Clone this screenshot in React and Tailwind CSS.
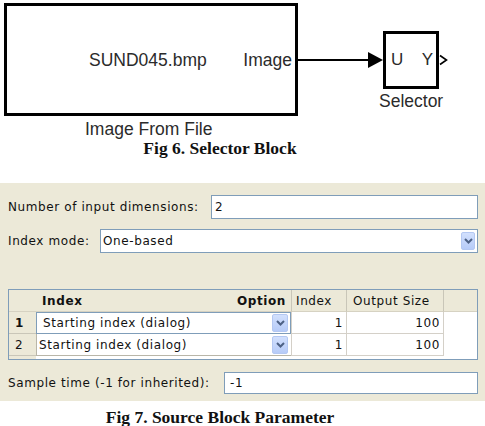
import React from 'react';

// small XP-style combo arrow button
function DropButton({ className }) {
  return (
    <span className={className}>
      <svg width="9" height="6" viewBox="0 0 9 6" fill="none">
        <path d="M1 1 L4.5 4.5 L8 1" stroke="#4D6185" strokeWidth="2" />
      </svg>
    </span>
  );
}

function ModelCanvas() {
  return (
    <div className="relative h-[138px] font-['Liberation_Sans',Arial,sans-serif] text-[17.5px] leading-[20px] text-[#2b2b2b]">
      {/* Image From File block */}
      <div className="absolute left-[4px] top-[3px] w-[294px] h-[113px] border-[3px] border-black flex items-center justify-between pl-[82px] pr-[3px]">
        <span>SUND045.bmp</span>
        <span>Image</span>
      </div>
      <div className="absolute left-[85px] top-[119px] whitespace-nowrap">Image From File</div>

      {/* signal line + input port */}
      <svg className="absolute left-[298px] top-[50px]" width="90" height="20" viewBox="0 0 90 20">
        <line x1="0" y1="10" x2="72" y2="10" stroke="#000" strokeWidth="2" />
        <path d="M70 2 L85 10 L70 18 Z" fill="#000" />
      </svg>

      {/* Selector block */}
      <div className="absolute left-[383px] top-[31px] w-[56px] h-[58px] border-[3px] border-black flex items-center justify-between pl-[5px] pr-[3px] text-[17px]">
        <span>U</span>
        <span>Y</span>
      </div>
      <svg className="absolute left-[439px] top-[54px]" width="10" height="12" viewBox="0 0 10 12">
        <path d="M1 1.5 L7.5 6 L1 10.5" stroke="#000" strokeWidth="1.6" fill="none" />
      </svg>
      <div className="absolute left-[379px] top-[91px] whitespace-nowrap">Selector</div>
    </div>
  );
}

function Caption({ children }) {
  return (
    <p className="pr-[45px] text-center font-['Liberation_Serif','Times_New_Roman',serif] font-bold text-[17.5px] leading-[20px] text-[#111]">
      {children}
    </p>
  );
}

function TableCell({ className, children }) {
  return <div className={className}>{children}</div>;
}

function ParameterDialog() {
  const head = 'bg-[#ECE9D8] flex items-center border-b border-[#D6D2C2]';
  const num = 'bg-[#ECE9D8] flex items-center pl-[6px] border-b border-[#C9C6B8]';
  const val = 'bg-white flex items-center justify-end pr-[3px] border-l border-b border-[#D4D0C8]';

  return (
    <div className="h-[218px] bg-[#ECE9D8] pl-2 pr-[7px] pt-3 font-['DejaVu_Sans',Verdana,sans-serif] text-[12px] tracking-[0.6px] text-[#111]">
      <div className="flex items-center">
        <span className="w-[203px] shrink-0">Number of input dimensions:</span>
        <div className="flex-1 h-[24px] bg-white border border-[#7F9DB9] flex items-center pl-[3px]">2</div>
      </div>

      <div className="flex items-center mt-[10px]">
        <span className="w-[92px] shrink-0">Index mode:</span>
        <div className="flex-1 h-[24px] bg-white border border-[#7F9DB9] flex items-center justify-between pl-[2px] pr-[2px]">
          <span>One-based</span>
          <DropButton className="w-[14px] h-[18px] flex items-center justify-center rounded-[2px] border border-[#B4C8F2] bg-[linear-gradient(#D2E0FD,#B6CBF8)]" />
        </div>
      </div>

      {/* index table */}
      <div className="mt-9 h-[71px] border border-[#7F9DB9] bg-white grid grid-cols-[27px_255px_55px_97px_1fr] grid-rows-[22px_22px_22px_1fr]">
        <TableCell className={head} />
        <TableCell className={`${head} justify-between pl-[6px] pr-[5px] font-bold`}>
          <span>Index</span>
          <span>Option</span>
        </TableCell>
        <TableCell className={`${head} border-l border-l-[#C9C6B8] pl-[4px]`}>Index</TableCell>
        <TableCell className={`${head} border-l border-l-[#C9C6B8] pl-[6px]`}>Output Size</TableCell>
        <TableCell className={`${head} border-l border-l-[#C9C6B8]`} />

        <TableCell className={`${num} font-bold`}>1</TableCell>
        <TableCell className="bg-white flex items-center justify-between border border-[#7F9DB9] pl-[6px] pr-[2px]">
          <span>Starting index (dialog)</span>
          <DropButton className="w-[16px] h-[18px] flex items-center justify-center rounded-[2px] border border-[#B4C8F2] bg-[linear-gradient(#D2E0FD,#B6CBF8)]" />
        </TableCell>
        <TableCell className={val}>1</TableCell>
        <TableCell className={val}>100</TableCell>
        <TableCell className="bg-white border-l border-[#D4D0C8]" />

        <TableCell className={num}>2</TableCell>
        <TableCell className="bg-white flex items-center justify-between border-l border-b border-[#B9B6A8] pl-[2px] pr-[3px]">
          <span>Starting index (dialog)</span>
          <DropButton className="w-[16px] h-[18px] flex items-center justify-center rounded-[2px] border border-[#B4C8F2] bg-[linear-gradient(#D2E0FD,#B6CBF8)]" />
        </TableCell>
        <TableCell className={val}>1</TableCell>
        <TableCell className={val}>100</TableCell>
        <TableCell className="bg-white border-l border-[#D4D0C8]" />

        <TableCell className="bg-[#ECE9D8]" />
        <TableCell className="col-span-4 bg-white" />
      </div>

      <div className="flex items-center mt-3">
        <span className="w-[216px] shrink-0">Sample time (-1 for inherited):</span>
        <div className="flex-1 h-[22px] bg-white border border-[#7F9DB9] flex items-center pl-[5px]">-1</div>
      </div>
    </div>
  );
}

export default function App() {
  return (
    <div className="w-[485px] h-[426px] bg-white overflow-hidden">
      <ModelCanvas />
      <Caption>Fig 6. Selector Block</Caption>
      <div className="mt-[25px]">
        <ParameterDialog />
      </div>
      <div className="mt-[6px]">
        <Caption>Fig 7. Source Block Parameter</Caption>
      </div>
    </div>
  );
}
